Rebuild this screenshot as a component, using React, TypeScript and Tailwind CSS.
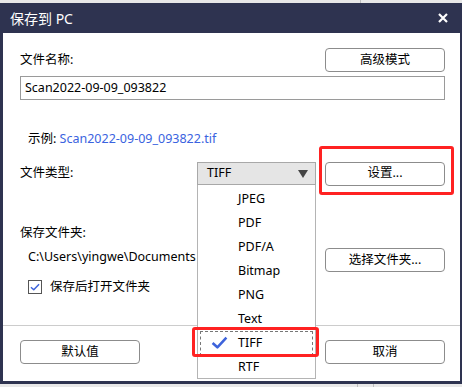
import React from 'react';

const FONT = { fontFamily: '"Noto Sans", "Noto Sans CJK SC", sans-serif' };

const ITEMS = ['JPEG', 'PDF', 'PDF/A', 'Bitmap', 'PNG', 'Text', 'TIFF', 'RTF'];

function Btn({ label, className = '' }: { label: string; className?: string }) {
  return (
    <div
      className={`w-[120px] h-6 shrink-0 rounded-[4px] border border-[#8c8c8c] bg-white flex items-center justify-center text-black ${className}`}
    >
      {label}
    </div>
  );
}

function Check({ className = '' }: { className?: string }) {
  return (
    <svg viewBox="0 0 16 12" className={className} fill="none">
      <path d="M1.5 6.5 L6 10.5 L14.5 1.5" stroke="#3d63db" strokeWidth="2.4" strokeLinejoin="round" />
    </svg>
  );
}

export default function App() {
  return (
    <div className="w-[462px] h-[387px] bg-[#e8e8e8] overflow-hidden relative" style={FONT}>
      {/* background window lines */}
      <div className="absolute top-0 left-[360px] w-px h-[3px] bg-[#bdbdbd]" />
      <div className="absolute top-[384px] left-[357px] w-px h-[3px] bg-[#bdbdbd]" />
      <div className="absolute top-[384px] left-[373px] w-px h-[3px] bg-[#bdbdbd]" />

      <div className="mt-[3px] h-[381px] flex flex-col border-l-[3px] border-r-[2px] border-b-[3px] border-[#2e3350] bg-white relative text-[12.5px]">
        {/* title bar */}
        <div className="h-[30px] -mr-[2px] -ml-[3px] pl-[10px] pr-[14px] bg-[#2e3350] flex items-center justify-between">
          <span className="text-white text-[14px]">保存到 PC</span>
          <svg viewBox="0 0 10 10" className="w-[10px] h-[10px]">
            <path d="M1 1 L9 9 M9 1 L1 9" stroke="white" strokeWidth="2.2" />
          </svg>
        </div>

        <div className="pl-[17px] pr-[15px] flex flex-col text-black">
          <div className="mt-[15px] h-6 flex items-center justify-between">
            <span>文件名称:</span>
            <Btn label="高级模式" />
          </div>
          <div className="mt-1 h-6 border border-[#9a9a9a] flex items-center pl-[4px]">Scan2022-09-09_093822</div>

          <div className="mt-[29px] h-5 flex items-center pl-[8px]">
            <span>示例:&nbsp;</span>
            <span className="text-[#3a63e0]">Scan2022-09-09_093822.tif</span>
          </div>

          <div className="mt-[13px] h-[23px] flex items-center">
            <span className="w-[177px]">文件类型:</span>
            <div className="w-[119px] h-[23px] border border-[#a8a8a8] bg-[#e5e5e5] flex items-center justify-between pl-[9px] pr-[7px]">
              <span>TIFF</span>
              <svg viewBox="0 0 10 8" className="w-[10px] h-[8px]">
                <path d="M0 0 H10 L5 8 Z" fill="#444" />
              </svg>
            </div>
            <div className="flex-1" />
            <Btn label="设置..." />
          </div>

          <div className="mt-[38px] h-5 flex items-center">保存文件夹:</div>
          <div className="mt-[5px] h-6 flex items-center justify-between">
            <span className="pl-[8px] mt-[-6px]">C:\Users\yingwe\Documents</span>
            <Btn label="选择文件夹..." />
          </div>
          <div className="mt-[5px] h-5 flex items-center pl-[8px] gap-[8px]">
            <div className="w-[14px] h-[14px] border border-[#555] flex items-center justify-center">
              <Check className="w-[10px] h-[8px]" />
            </div>
            <span>保存后打开文件夹</span>
          </div>
        </div>

        <div className="mt-[28px] h-px bg-[#cccccc]" />

        <div className="pl-[17px] pr-[15px] mt-[14px] flex items-center justify-between">
          <Btn label="默认值" />
          <Btn label="取消" />
        </div>

        {/* dropdown list overlay */}
        <div className="absolute left-[194px] top-[182px] w-[119px] h-[194px] pt-[2px] bg-white border border-[#b4b4b4] border-t-0 text-black">
          {ITEMS.map((it) => (
            <div key={it} className="h-6 flex items-center pl-[40px] relative">
              {it === 'TIFF' && (
                <>
                  <div className="absolute left-[2px] right-[2px] top-0 bottom-[-1px] border border-dashed border-[#777]" />
                  <Check className="absolute left-[13px] top-[5px] w-[17px] h-[13px]" />
                </>
              )}
              <span className="relative">{it}</span>
            </div>
          ))}
        </div>

        {/* red highlight boxes */}
        <div className="absolute left-[316px] top-[143px] w-[135px] h-[49px] border-[3px] border-[#f22] rounded-[3px]" />
        <div className="absolute left-[189px] top-[324px] w-[127px] h-[30px] border-[3px] border-[#f22] rounded-[3px]" />
      </div>
    </div>
  );
}
